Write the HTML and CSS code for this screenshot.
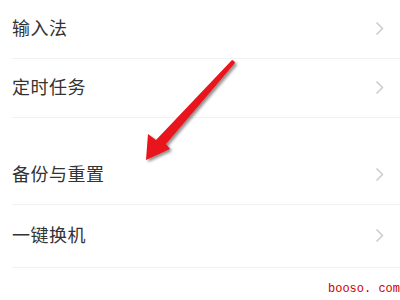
FILE: index.html
```
<!DOCTYPE html>
<html lang="zh">
<head>
    <meta charset="UTF-8">
    <meta name="viewport" content="width=device-width, initial-scale=1.0">
    <title>设置</title>
    <link rel="stylesheet" href="styles.css">
</head>
<body>
    <div class="settings">
        <div class="group">
            <div class="row">
                <span class="label">输入法</span>
                <svg class="chevron" width="9" height="15" viewBox="0 0 9 15"><polyline points="1.5,1.5 7.5,7.5 1.5,13.5"/></svg>
            </div>
            <div class="row">
                <span class="label">定时任务</span>
                <svg class="chevron" width="9" height="15" viewBox="0 0 9 15"><polyline points="1.5,1.5 7.5,7.5 1.5,13.5"/></svg>
            </div>
        </div>

        <div class="group">
            <div class="row">
                <span class="label">备份与重置</span>
                <svg class="chevron" width="9" height="15" viewBox="0 0 9 15"><polyline points="1.5,1.5 7.5,7.5 1.5,13.5"/></svg>
            </div>
            <div class="row row-last">
                <span class="label">一键换机</span>
                <svg class="chevron" width="9" height="15" viewBox="0 0 9 15"><polyline points="1.5,1.5 7.5,7.5 1.5,13.5"/></svg>
            </div>
        </div>
    </div>

    <!-- pointer arrow drawn over the list -->
    <svg class="pointer" width="400" height="300" viewBox="0 0 400 300">
        <defs>
            <filter id="shade" x="-20%" y="-20%" width="140%" height="140%">
                <feGaussianBlur in="SourceAlpha" stdDeviation="1.6"/>
                <feOffset dx="2" dy="2"/>
                <feComponentTransfer><feFuncA type="linear" slope="0.45"/></feComponentTransfer>
                <feMerge><feMergeNode/><feMergeNode in="SourceGraphic"/></feMerge>
            </filter>
        </defs>
        <polygon filter="url(#shade)" fill="#e8141b"
            points="234,61 235,63 166,144 170,149 146,160 148,134 156,140 232,60"/>
    </svg>

    <div class="watermark">booso. com</div>
</body>
</html>
```
FILE: styles.css
```
body {
  margin: 0;
  background-color: #ffffff;
  font-family: "Noto Sans CJK SC", "Noto Sans", sans-serif;
  color: #333333;
  overflow: hidden;
}

.settings {
  display: flex;
  flex-direction: column;
  gap: 28px;
}

.group {
  display: flex;
  flex-direction: column;
}

.row {
  display: flex;
  align-items: center;
  justify-content: space-between;
  height: 58px;
  margin-left: 12px;
  padding-right: 16px;
  border-bottom: 1px solid #f1f1f1;
}

.row-last {
  height: 62px;
}

.label {
  font-size: 18px;
  letter-spacing: 0.5px;
  padding-bottom: 4px;
}

.chevron {
  margin-bottom: 2px;
}

.chevron polyline {
  fill: none;
  stroke: #cccccc;
  stroke-width: 1.5;
}

.pointer {
  position: absolute;
  left: 0;
  top: 0;
}

.watermark {
  position: absolute;
  right: 0;
  bottom: 4px;
  font-family: "Liberation Mono", monospace;
  font-size: 12px;
  color: #cc0000;
}
```
